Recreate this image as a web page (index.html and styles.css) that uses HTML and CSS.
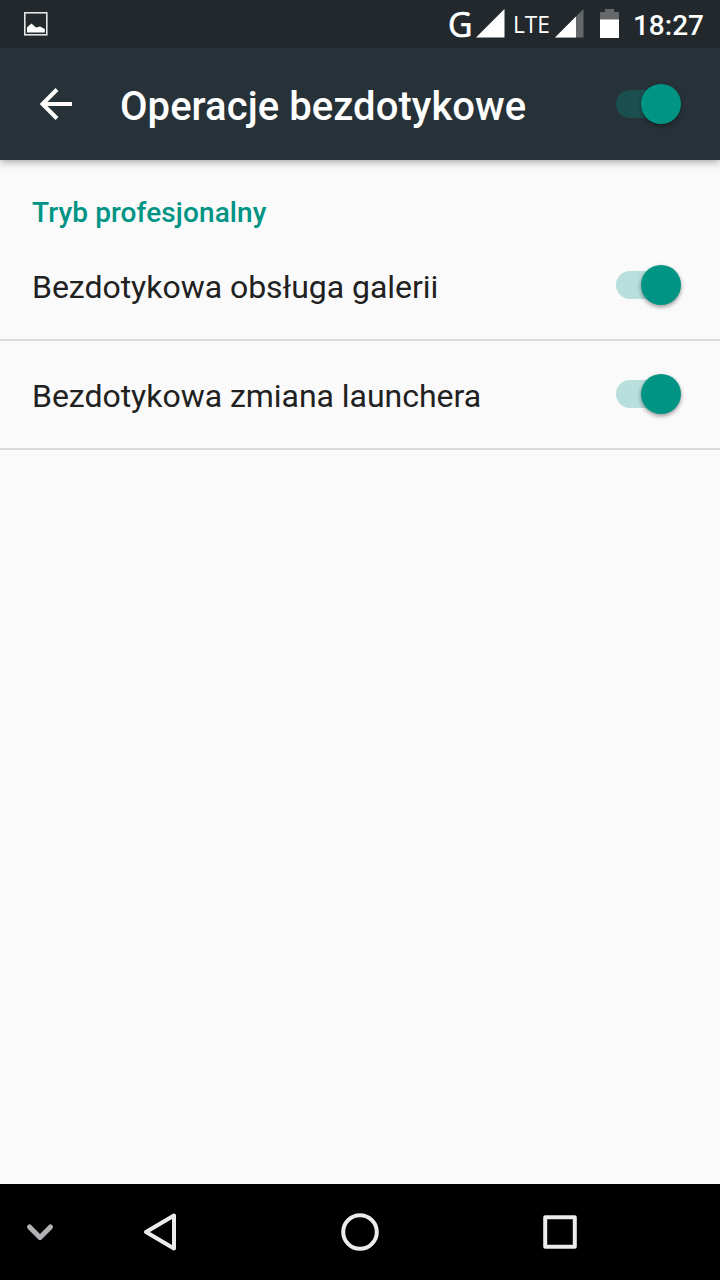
FILE: index.html
```
<!DOCTYPE html>
<html lang="pl">
<head>
  <meta charset="UTF-8" />
  <meta name="viewport" content="width=device-width, initial-scale=1.0" />
  <title>Operacje bezdotykowe</title>
  <link rel="stylesheet" href="styles.css">
</head>
<body>
  <div class="statusbar">
    <svg class="notification" width="24" height="24" viewBox="0 0 24 24">
      <rect x="0.8" y="0.8" width="22" height="22" fill="none" stroke="#e4e4e4" stroke-width="1.6" />
      <path d="M3 20.5V15.5L5 13.5L7.5 11.5L12 15.5L16 14.5L18 15.5L20.8 17V20.5Z" fill="#fff" />
    </svg>
    <svg class="indicators" width="180" height="48" viewBox="440 0 180 48">
      <text class="net big" x="448" y="36.5" font-size="34" textLength="24.5" lengthAdjust="spacingAndGlyphs">G</text>
      <path d="M476 37.5L504.5 9V37.5Z" fill="#fff" />
      <text class="net" x="513" y="33" font-size="24" textLength="37" lengthAdjust="spacingAndGlyphs">LTE</text>
      <path d="M555 37.5L583.5 9V37.5Z" fill="#64686b" />
      <path d="M555 37.5L576 16.5V37.5Z" fill="#fff" />
      <path d="M600 12H605V9H614V12H619V20H600Z" fill="#64686b" />
      <rect x="600" y="19.5" width="19" height="18.5" fill="#fff" />
    </svg>
    <span class="clock">18:27</span>
  </div>

  <header class="toolbar">
    <svg class="back" width="34" height="34" viewBox="0 0 34 34">
      <path d="M33 17H4M18 2.5L3.5 17L18 31.5" />
    </svg>
    <h1 class="title">Operacje bezdotykowe</h1>
    <div class="switch dark"><div class="thumb"></div></div>
  </header>

  <main class="content">
    <h2 class="category">Tryb profesjonalny</h2>
    <div class="row">
      <span class="label">Bezdotykowa obsługa galerii</span>
      <div class="switch"><div class="thumb"></div></div>
    </div>
    <div class="row">
      <span class="label">Bezdotykowa zmiana launchera</span>
      <div class="switch"><div class="thumb"></div></div>
    </div>
  </main>

  <nav class="navbar">
    <svg width="720" height="96" viewBox="0 0 720 96">
      <path d="M29.5 43L40 53.5L50.5 43" stroke="#b3b3b7" stroke-width="5" />
      <path d="M174 31.5V64.5L146 48Z" />
      <circle cx="360" cy="48" r="16.8" />
      <rect x="545.2" y="33.2" width="29.6" height="29.6" />
    </svg>
  </nav>
</body>
</html>
```
FILE: styles.css
```
body {
  margin: 0;
  height: 1280px;
  display: flex;
  flex-direction: column;
  background-color: #fafafa;
  font-family: Roboto, sans-serif;
  overflow: hidden;
}
.statusbar {
  position: relative;
  z-index: 1;
  display: flex;
  height: 48px;
  background-color: #22282b;
  color: #fff;
}
.notification {
  margin: 12px auto 0 24px;
}
.net {
  font-family: "Open Sans", sans-serif;
  fill: #fff;
}
.net.big {
  stroke: #fff;
  stroke-width: 0.7;
}
.clock {
  width: 84px;
  padding-right: 16px;
  line-height: 52px;
  text-align: right;
  font-size: 28px;
  font-weight: 500;
}
.toolbar {
  position: relative;
  display: flex;
  align-items: center;
  height: 112px;
  padding: 0 39px;
  background-color: #273238;
  color: #fff;
  box-sizing: border-box;
  box-shadow: 0 2px 8px rgba(0, 0, 0, 0.35);
}
.back {
  fill: none;
  stroke: #fff;
  stroke-width: 4;
}
.title {
  flex: 1;
  margin: 4px 0 0 47px;
  font-size: 40px;
  font-weight: 500;
  letter-spacing: 0.05px;
}
.content {
  flex: 1;
}
.category {
  box-sizing: border-box;
  height: 72px;
  margin: 0;
  padding: 36px 32px 0;
  line-height: 33px;
  font-size: 28px;
  font-weight: 500;
  letter-spacing: 0.1px;
  color: #009485;
}
.row {
  display: flex;
  align-items: center;
  justify-content: space-between;
  box-sizing: border-box;
  height: 109px;
  padding: 0 39px 1px 32px;
  border-bottom: 2px solid #dadada;
}
.label {
  padding-top: 3px;
  font-size: 32px;
  letter-spacing: -0.03px;
  color: #212121;
}
/* track with the thumb pushed to the right end */
.switch {
  display: flex;
  align-items: center;
  width: 65px;
  height: 40px;
}
.switch::before {
  content: "";
  width: 46px;
  height: 28px;
  margin-right: -21px;
  border-radius: 14px;
  background-color: #b8dfdb;
}
.switch.dark::before {
  background-color: #1c4f4f;
}
.thumb {
  position: relative;
  width: 40px;
  height: 40px;
  border-radius: 50%;
  background-color: #009485;
  box-shadow: 0 2px 4px rgba(0, 0, 0, 0.4);
}
.navbar {
  height: 96px;
  background-color: #000;
}
.navbar svg {
  display: block;
  fill: none;
  stroke: #ececec;
  stroke-width: 4;
  stroke-linecap: round;
  stroke-linejoin: round;
}
```
